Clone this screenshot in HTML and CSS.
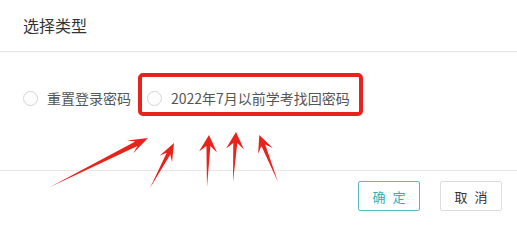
FILE: index.html
```html
<!DOCTYPE html>
<html lang="zh-CN">
<head>
<meta charset="utf-8">
<link rel="stylesheet" href="styles.css">
</head>
<body>
<div class="dialog">
  <div class="dialog-header">
    <span class="dialog-title">选择类型</span>
  </div>
  <div class="dialog-body">
    <div class="options">
      <label class="option">
        <span class="radio"></span>
        <span class="option-label">重置登录密码</span>
      </label>
      <label class="option">
        <span class="radio"></span>
        <span class="option-label">2022年7月以前学考找回密码</span>
      </label>
    </div>
  </div>
  <div class="dialog-footer">
    <button class="btn btn-primary">确 定</button>
    <button class="btn btn-default">取 消</button>
  </div>

  <div class="highlight-box"></div>
  <svg class="arrows" width="517" height="222" viewBox="0 0 517 222">
    <g fill="#e8231c">
      <polygon points="50,187 137.5,146 133.2,153.2 148,138 127,140.6 135.3,141.6"/>
      <polygon points="150,188 170.3,154.6 172,162.2 174,143 159.6,155.8 166.7,152.8"/>
      <polygon points="207,187 210.4,146.1 217,152.5 209,135 199,151.5 206.4,145.9"/>
      <polygon points="233,182 237.3,143.1 244,149.5 236,132 226,148.5 233.3,142.9"/>
      <polygon points="278,182 265.2,144.5 272.9,147.9 259.3,135 258.1,153.7 261.4,145.9"/>
    </g>
  </svg>
</div>
</body>
</html>
```

FILE: styles.css
```css
* { box-sizing: border-box; }
html, body {
  margin: 0;
  padding: 0;
  background: #ffffff;
}
body {
  font-family: "Noto Sans CJK SC", "Noto Sans", sans-serif;
  color: #333;
}
.dialog {
  position: relative;
  width: 517px;
  height: 222px;
  overflow: hidden;
}
.dialog-header {
  height: 52px;
  display: flex;
  align-items: center;
  padding: 0 0 2px 23px;
  border-bottom: 1px solid #e6e6e6;
}
.dialog-title {
  font-size: 16px;
  line-height: 20px;
  color: #333;
}
.dialog-body {
  height: 118px;
  padding: 36px 0 0 23px;
}
.options {
  display: flex;
  align-items: center;
  gap: 16px;
}
.option {
  display: flex;
  align-items: center;
  gap: 9px;
  height: 20px;
}
.radio {
  width: 15px;
  height: 15px;
  border: 1px solid #d4d4d4;
  border-radius: 50%;
  background: #fdfdfd;
}
.option-label {
  font-size: 14px;
  line-height: 20px;
  color: #555;
}
.dialog-footer {
  border-top: 1px solid #e6e6e6;
  display: flex;
  justify-content: flex-end;
  gap: 20px;
  padding: 10px 15px 0 0;
}
.btn {
  width: 62px;
  height: 30px;
  font-family: "Noto Sans CJK SC", "Noto Sans", sans-serif;
  font-size: 13px;
  letter-spacing: 2px;
  text-indent: 2px;
  background: #fff;
  border-radius: 2px;
  padding: 0;
}
.btn-primary {
  border: 1px solid #56bcbc;
  color: #2fb0b0;
}
.btn-default {
  border: 1px solid #dcdcdc;
  color: #333;
}
.highlight-box {
  position: absolute;
  left: 138px;
  top: 73px;
  width: 225px;
  height: 43px;
  border: 4px solid #e8231c;
  border-radius: 5px;
}
.arrows {
  position: absolute;
  left: 0;
  top: 0;
}
```
